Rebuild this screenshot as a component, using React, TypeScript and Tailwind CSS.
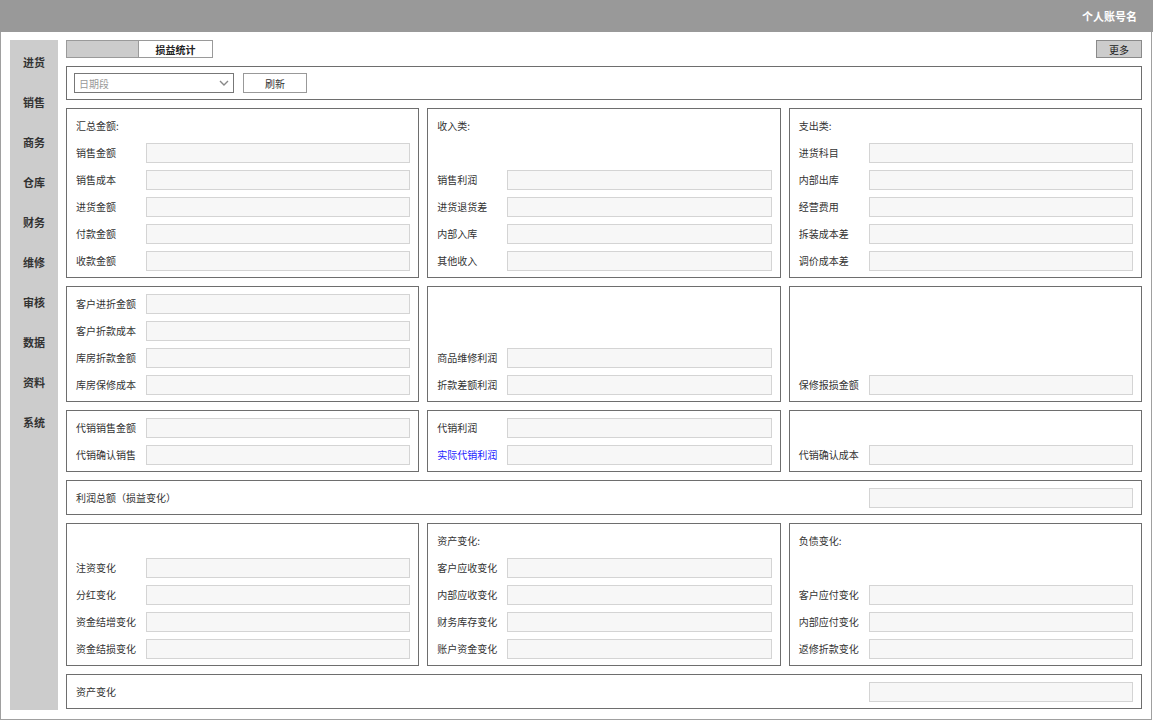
import React from 'react';

type Row = { t: 'title'; text: string } | { t: 'field'; label: string; blue?: boolean } | { t: 'empty' };

const title = (text: string): Row => ({ t: 'title', text });
const field = (label: string, blue = false): Row => ({ t: 'field', label, blue });
const empty: Row = { t: 'empty' };

const menu = ['进货', '销售', '商务', '仓库', '财务', '维修', '审核', '数据', '资料', '系统'];

const sections: Row[][][] = [
  [
    [title('汇总金额:'), field('销售金额'), field('销售成本'), field('进货金额'), field('付款金额'), field('收款金额')],
    [title('收入类:'), empty, field('销售利润'), field('进货退货差'), field('内部入库'), field('其他收入')],
    [title('支出类:'), field('进货科目'), field('内部出库'), field('经营费用'), field('拆装成本差'), field('调价成本差')],
  ],
  [
    [field('客户进折金额'), field('客户折款成本'), field('库房折款金额'), field('库房保修成本')],
    [empty, empty, field('商品维修利润'), field('折款差额利润')],
    [empty, empty, empty, field('保修报损金额')],
  ],
  [
    [field('代销销售金额'), field('代销确认销售')],
    [field('代销利润'), field('实际代销利润', true)],
    [empty, field('代销确认成本')],
  ],
];

const bottomSection: Row[][] = [
  [empty, field('注资变化'), field('分红变化'), field('资金结增变化'), field('资金结损变化')],
  [title('资产变化:'), field('客户应收变化'), field('内部应收变化'), field('财务库存变化'), field('账户资金变化')],
  [title('负债变化:'), empty, field('客户应付变化'), field('内部应付变化'), field('返修折款变化')],
];

const Input = ({ className = '' }: { className?: string }) => (
  <div className={`h-5 border border-[#d4d4d4] bg-[#f7f7f7] ${className}`} />
);

const Card = ({ rows }: { rows: Row[] }) => (
  <div className="flex flex-col gap-[7px] border border-[#6e6e6e] bg-white py-[6.5px] pl-[9px] pr-2">
    {rows.map((row, i) => {
      if (row.t === 'title') {
        return (
          <div key={i} className="flex h-5 items-center text-[10px] text-[#333]">
            {row.text}
          </div>
        );
      }
      if (row.t === 'empty') return <div key={i} className="h-5" />;
      return (
        <div key={i} className="flex h-5 items-center">
          <span className={`w-[70px] shrink-0 whitespace-nowrap text-[10px] ${row.blue ? 'text-[#1a1aff]' : 'text-[#333]'}`}>
            {row.label}
          </span>
          <Input className="flex-1" />
        </div>
      );
    })}
  </div>
);

const WideCard = ({ label }: { label: string }) => (
  <div className="flex items-center justify-between border border-[#6e6e6e] bg-white py-[6.5px] pl-[9px] pr-2">
    <span className="text-[10px] text-[#333]">{label}</span>
    <Input className="w-[264px]" />
  </div>
);

export default function App() {
  return (
    <div className="h-[722px] w-[1153px] bg-white font-['Noto_Sans_CJK_SC','Noto_Sans',sans-serif]">
      <div className="flex h-8 items-center justify-end bg-[#999999] pr-4 text-[11px] font-bold text-white">
        个人账号名
      </div>

      <div className="flex h-[688px] w-[1152px] gap-2 border-x border-b border-[#a0a0a0] pb-[9px] pl-[9px] pr-[9px] pt-2">
        <nav className="flex w-12 shrink-0 flex-col gap-5 bg-[#cccccc] pt-3">
          {menu.map((m) => (
            <div key={m} className="flex h-5 items-center justify-center text-[11px] font-bold text-[#333]">
              {m}
            </div>
          ))}
        </nav>

        <main className="flex min-w-0 flex-1 flex-col gap-2">
          <div className="flex h-[18px] items-stretch justify-between">
            <div className="flex">
              <div className="w-[73px] border border-[#9a9a9a] bg-[#cccccc]" />
              <div className="flex w-[74px] items-center justify-center border border-l-0 border-[#9a9a9a] bg-white text-[10px] font-bold text-[#222]">
                损益统计
              </div>
            </div>
            <button className="flex w-[46px] items-center justify-center border border-[#8a8a8a] bg-[#cccccc] text-[10px] text-[#222]">
              更多
            </button>
          </div>

          <div className="flex h-[34px] items-center gap-[9px] border border-[#6e6e6e] px-[7px]">
            <div className="flex h-5 w-[160px] items-center justify-between border border-[#777] px-[4px] text-[10px] text-[#999]">
              <span>日期段</span>
              <svg width="10" height="6" viewBox="0 0 10 6" fill="none">
                <path d="M1 1l4 4 4-4" stroke="#888" strokeWidth="1.4" />
              </svg>
            </div>
            <button className="flex h-5 w-[64px] items-center justify-center border border-[#999] bg-white text-[10px] text-[#333]">
              刷新
            </button>
          </div>

          {sections.map((cols, i) => (
            <div key={i} className="grid grid-cols-3 gap-2">
              {cols.map((rows, j) => (
                <Card key={j} rows={rows} />
              ))}
            </div>
          ))}

          <WideCard label="利润总额（损益变化）" />

          <div className="grid grid-cols-3 gap-2">
            {bottomSection.map((rows, j) => (
              <Card key={j} rows={rows} />
            ))}
          </div>

          <WideCard label="资产变化" />
        </main>
      </div>
    </div>
  );
}
